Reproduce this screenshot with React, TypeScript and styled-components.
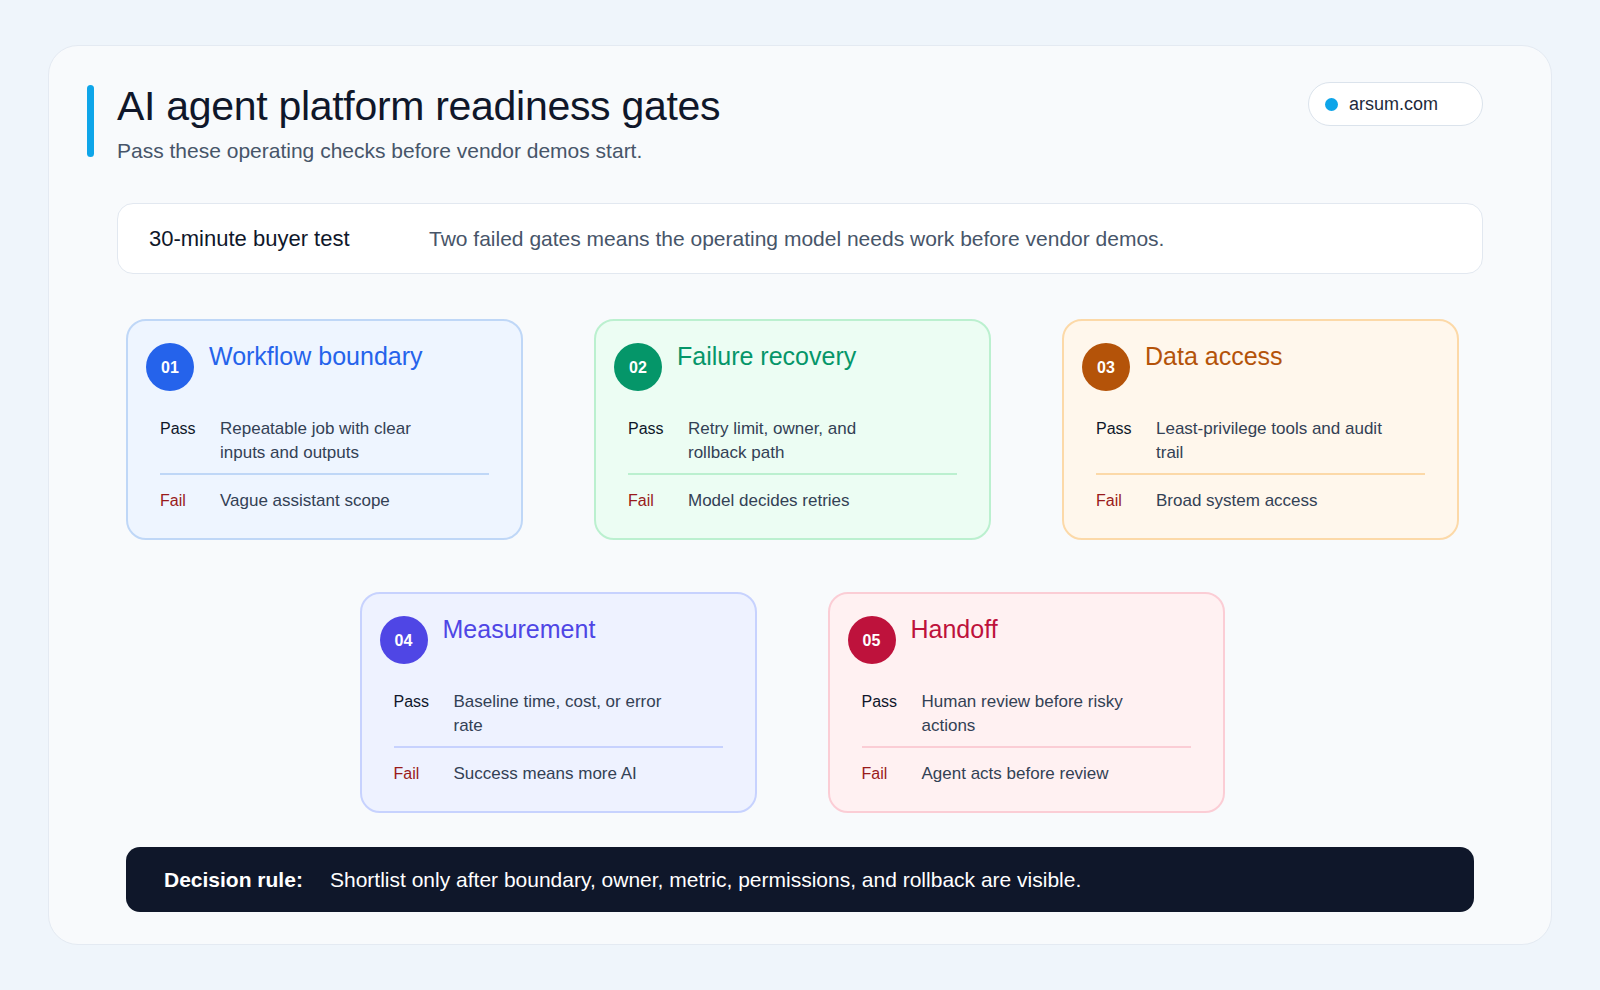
import React from 'react';
import styled, { createGlobalStyle } from 'styled-components';

const Global = createGlobalStyle`
  html, body { margin: 0; padding: 0; background: #eff5fb; }
  body { font-family: "Liberation Sans", Arial, sans-serif; color: #0f172a; }
`;

const Page = styled.div`
  width: 1600px;
  height: 990px;
  box-sizing: border-box;
  padding: 45px 48px;
`;

const Sheet = styled.div`
  box-sizing: border-box;
  height: 900px;
  background: #f8fafc;
  border: 1.5px solid #e4eaf2;
  border-radius: 30px;
  padding: 36px 68px 0 68px;
  position: relative;
`;

const Header = styled.div`
  display: flex;
  justify-content: space-between;
  align-items: flex-start;
  position: relative;
`;

const Accent = styled.div`
  position: absolute;
  left: -30px;
  top: 3px;
  width: 7px;
  height: 72px;
  border-radius: 4px;
  background: #0ea5e9;
`;

const Title = styled.h1`
  margin: 0;
  font-size: 41px;
  font-weight: 400;
  letter-spacing: -0.3px;
  color: #0f172a;
  line-height: 48px;
`;

const Subtitle = styled.p`
  margin: 9px 0 0;
  font-size: 21px;
  color: #475569;
`;

const Pill = styled.div`
  display: flex;
  align-items: center;
  gap: 11px;
  width: 175px;
  height: 44px;
  box-sizing: border-box;
  padding-left: 16px;
  border: 1.5px solid #dbe3ec;
  border-radius: 22px;
  background: #fff;
  font-size: 18px;
  color: #1e293b;
  margin-top: 0;
`;

const Dot = styled.span`
  width: 13px;
  height: 13px;
  border-radius: 50%;
  background: #0ea5e9;
`;

const TestBar = styled.div`
  margin-top: 40px;
  height: 71px;
  box-sizing: border-box;
  display: flex;
  align-items: center;
  padding-left: 31px;
  background: #fff;
  border: 1.5px solid #e2e8f0;
  border-radius: 16px;
  font-size: 22px;
`;

const TestLabel = styled.div`
  width: 280px;
  color: #0f172a;
`;

const TestText = styled.div`
  font-size: 21px;
  color: #475569;
`;

const Gates = styled.div`
  padding: 45px 9px 0;
  display: flex;
  flex-direction: column;
  gap: 52px;
`;

const Row = styled.div<{ $center?: boolean }>`
  display: flex;
  gap: 71px;
  justify-content: ${p => (p.$center ? 'center' : 'flex-start')};
  padding-right: ${p => (p.$center ? '16px' : '0')};
`;

type Tone = { fg: string; bg: string; border: string };

const Card = styled.div<{ $tone: Tone }>`
  width: 397px;
  height: 221px;
  box-sizing: border-box;
  background: ${p => p.$tone.bg};
  border: 2px solid ${p => p.$tone.border};
  border-radius: 20px;
  padding: 20px 32px 0 18px;
`;

const CardHead = styled.div`
  display: flex;
  gap: 15px;
  height: 76px;
`;

const Badge = styled.div<{ $tone: Tone }>`
  margin-top: 2px;
  width: 48px;
  height: 48px;
  border-radius: 50%;
  background: ${p => p.$tone.fg};
  color: #fff;
  display: flex;
  align-items: center;
  justify-content: center;
  font-size: 16px;
  font-weight: 700;
  padding-top: 2px;
  box-sizing: border-box;
`;

const CardTitle = styled.div<{ $tone: Tone }>`
  color: ${p => p.$tone.fg};
  font-size: 25px;
  line-height: 30px;
`;

const Check = styled.div`
  display: flex;
  padding-left: 14px;
  font-size: 17px;
  line-height: 24px;
`;

const PassBlock = styled(Check)<{ $tone: Tone }>`
  height: 56px;
  border-bottom: 2px solid ${p => p.$tone.border};
  margin-left: 14px;
  padding-left: 0;
`;

const FailBlock = styled(Check)`
  margin-top: 14px;
  margin-left: 14px;
  padding-left: 0;
`;

const Label = styled.span<{ $fail?: boolean }>`
  width: 60px;
  flex-shrink: 0;
  font-size: 16px;
  color: ${p => (p.$fail ? '#991b1b' : '#0f172a')};
`;

const CheckText = styled.span`
  color: #334155;
  max-width: 230px;
`;

const Decision = styled.div`
  margin: 34px 9px 0;
  height: 65px;
  border-radius: 14px;
  background: #0f172a;
  color: #fff;
  display: flex;
  align-items: center;
  padding-left: 38px;
  font-size: 21px;
`;

const DecisionLabel = styled.span`
  font-weight: 700;
  width: 166px;
`;

const tones: Record<string, Tone> = {
  blue: { fg: '#2563eb', bg: '#eef5ff', border: '#bfd7f7' },
  green: { fg: '#059669', bg: '#ecfdf3', border: '#bbf0cf' },
  orange: { fg: '#b45309', bg: '#fff7ec', border: '#fcd9a8' },
  indigo: { fg: '#4f46e5', bg: '#eef2ff', border: '#c7d2fe' },
  rose: { fg: '#be123c', bg: '#fff1f2', border: '#fbcdd5' },
};

const gates = [
  { n: '01', t: 'Workflow boundary', tone: 'blue', pass: 'Repeatable job with clear inputs and outputs', fail: 'Vague assistant scope' },
  { n: '02', t: 'Failure recovery', tone: 'green', pass: 'Retry limit, owner, and rollback path', fail: 'Model decides retries' },
  { n: '03', t: 'Data access', tone: 'orange', pass: 'Least-privilege tools and audit trail', fail: 'Broad system access' },
  { n: '04', t: 'Measurement', tone: 'indigo', pass: 'Baseline time, cost, or error rate', fail: 'Success means more AI' },
  { n: '05', t: 'Handoff', tone: 'rose', pass: 'Human review before risky actions', fail: 'Agent acts before review' },
];

const Gate = ({ g }: { g: typeof gates[number] }) => {
  const tone = tones[g.tone];
  return (
    <Card $tone={tone}>
      <CardHead>
        <Badge $tone={tone}>{g.n}</Badge>
        <CardTitle $tone={tone}>{g.t}</CardTitle>
      </CardHead>
      <PassBlock $tone={tone}>
        <Label>Pass</Label>
        <CheckText>{g.pass}</CheckText>
      </PassBlock>
      <FailBlock>
        <Label $fail>Fail</Label>
        <CheckText>{g.fail}</CheckText>
      </FailBlock>
    </Card>
  );
};

export default function App() {
  return (
    <Page>
      <Global />
      <Sheet>
        <Header>
          <Accent />
          <div>
            <Title>AI agent platform readiness gates</Title>
            <Subtitle>Pass these operating checks before vendor demos start.</Subtitle>
          </div>
          <Pill>
            <Dot />
            arsum.com
          </Pill>
        </Header>
        <TestBar>
          <TestLabel>30-minute buyer test</TestLabel>
          <TestText>Two failed gates means the operating model needs work before vendor demos.</TestText>
        </TestBar>
        <Gates>
          <Row>
            {gates.slice(0, 3).map(g => <Gate key={g.n} g={g} />)}
          </Row>
          <Row $center>
            {gates.slice(3).map(g => <Gate key={g.n} g={g} />)}
          </Row>
        </Gates>
        <Decision>
          <DecisionLabel>Decision rule:</DecisionLabel>
          Shortlist only after boundary, owner, metric, permissions, and rollback are visible.
        </Decision>
      </Sheet>
    </Page>
  );
}
